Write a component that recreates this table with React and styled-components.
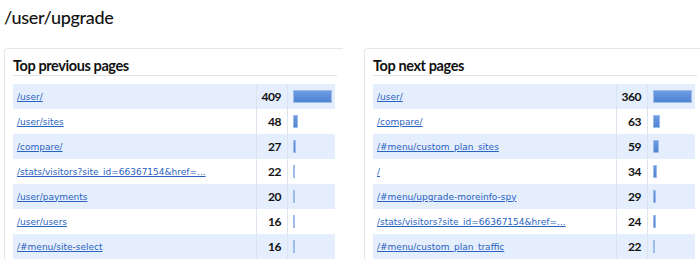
import React from "react";
import styled, { createGlobalStyle } from "styled-components";

const Global = createGlobalStyle`
  html, body { margin: 0; padding: 0; background: #fff; overflow: hidden; }
  body { font-family: Lato, "Open Sans", sans-serif; color: #111; }
`;

const Page = styled.div`
  box-sizing: border-box;
  width: 700px;
  height: 264px;
  overflow: hidden;
  padding: 5px 0 0 4px;
`;

const Title = styled.h1`
  margin: 0;
  font-family: Lato, sans-serif;
  font-weight: 500;
  font-size: 18px;
  line-height: 24px;
  color: #111;
  letter-spacing: -0.3px;
`;

const Panels = styled.div`
  display: flex;
  gap: 21px;
  margin-top: 19px;
`;

const Panel = styled.section`
  width: 322px;
  flex: none;
  border-top: 1px solid #e6e6e6;
  border-left: 1px solid #e6e6e6;
  border-top-left-radius: 4px;
  padding: 8px 8px 0 8px;
`;

const Heading = styled.h2`
  margin: 0 0 8px 0;
  font-family: Lato, sans-serif;
  font-weight: 700;
  font-size: 14.5px;
  line-height: 18px;
  letter-spacing: -0.4px;
  border-bottom: 1px solid #e4e4e4;
  color: #111;
  width: 324px;
`;

const Row = styled.div`
  display: grid;
  grid-template-columns: 1fr 31px 48px;
  height: 25px;
  width: 322px;
  background: ${(p) => (p.$shaded ? "#e5eefd" : "#fff")};
`;

const LabelCell = styled.div`
  display: flex;
  align-items: center;
  padding-left: 4px;
  overflow: hidden;
  white-space: nowrap;
`;

const PageLink = styled.a`
  font-family: "DejaVu Sans", Verdana, sans-serif;
  font-size: 9px;
  color: #2a62bf;
  text-decoration: underline;
`;

const NumCell = styled.div`
  display: flex;
  align-items: center;
  justify-content: flex-end;
  padding-right: 6px;
  border-left: 1px solid #dde4ef;
  font-family: Lato, sans-serif;
  font-weight: 700;
  font-size: 12px;
  letter-spacing: -0.5px;
  color: #111;
`;

const BarCell = styled.div`
  display: flex;
  align-items: center;
  padding-left: 5px;
  border-left: 1px solid #dde4ef;
`;

const Bar = styled.div`
  height: 13px;
  box-sizing: border-box;
  border: 1px solid #9dbcea;
  background: linear-gradient(to bottom, #6c9be2, #4f84d4);
`;

const prev = [
  ["/user/", 409],
  ["/user/sites", 48],
  ["/compare/", 27],
  ["/stats/visitors?site_id=66367154&href=...", 22],
  ["/user/payments", 20],
  ["/user/users", 16],
  ["/#menu/site-select", 16],
];

const next = [
  ["/user/", 360],
  ["/compare/", 63],
  ["/#menu/custom_plan_sites", 59],
  ["/", 34],
  ["/#menu/upgrade-moreinfo-spy", 29],
  ["/stats/visitors?site_id=66367154&href=...", 24],
  ["/#menu/custom_plan_traffic", 22],
];

function Table({ title, rows }) {
  const max = rows[0][1];
  return (
    <Panel>
      <Heading>{title}</Heading>
      {rows.map(([label, n], i) => (
        <Row key={i} $shaded={i % 2 === 0}>
          <LabelCell>
            <PageLink href="#">{label}</PageLink>
          </LabelCell>
          <NumCell>{n}</NumCell>
          <BarCell>
            <Bar style={{ width: Math.max(2, Math.round((n / max) * 39)) + "px" }} />
          </BarCell>
        </Row>
      ))}
    </Panel>
  );
}

export default function App() {
  return (
    <Page>
      <Global />
      <Title>/user/upgrade</Title>
      <Panels>
        <Table title="Top previous pages" rows={prev} />
        <Table title="Top next pages" rows={next} />
      </Panels>
    </Page>
  );
}
